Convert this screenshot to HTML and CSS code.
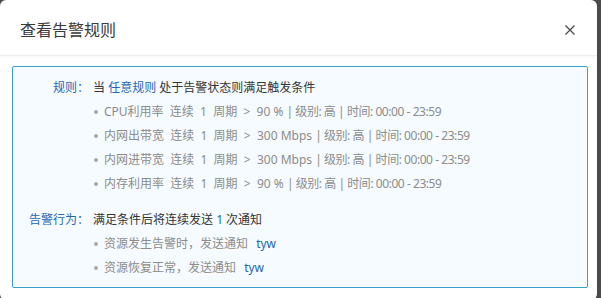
FILE: index.html
```html
<!DOCTYPE html>
<html lang="zh-CN">
<head>
<meta charset="UTF-8" />
<title>查看告警规则</title>
<link rel="stylesheet" href="styles.css">
</head>
<body>
<div class="dialog">
  <header class="dialog-header">
    <h2 class="dialog-title">查看告警规则</h2>
    <button class="dialog-close" aria-label="关闭">
      <svg width="10" height="10" viewBox="0 0 10 10"><path d="M0.5 0.5L9.5 9.5M9.5 0.5L0.5 9.5" stroke="#4a4a4a" stroke-width="1.3" fill="none"/></svg>
    </button>
  </header>

  <div class="dialog-body">
    <div class="rule-box">
      <section class="rule-section">
        <div class="rule-label">规则：</div>
        <div class="rule-content">
          <div class="rule-line">当 <span class="hl">任意规则</span> 处于告警状态则满足触发条件</div>
          <ul class="rule-list">
            <li>CPU利用率 &nbsp;连续 &nbsp;1 &nbsp;周期 &nbsp;&gt; &nbsp;90 % <span class="meta">| 级别: 高 | 时间: 00:00 - 23:59</span></li>
            <li>内网出带宽 &nbsp;连续 &nbsp;1 &nbsp;周期 &nbsp;&gt; &nbsp;300 Mbps <span class="meta">| 级别: 高 | 时间: 00:00 - 23:59</span></li>
            <li>内网进带宽 &nbsp;连续 &nbsp;1 &nbsp;周期 &nbsp;&gt; &nbsp;300 Mbps <span class="meta">| 级别: 高 | 时间: 00:00 - 23:59</span></li>
            <li>内存利用率 &nbsp;连续 &nbsp;1 &nbsp;周期 &nbsp;&gt; &nbsp;90 % <span class="meta">| 级别: 高 | 时间: 00:00 - 23:59</span></li>
          </ul>
        </div>
      </section>

      <section class="rule-section action">
        <div class="rule-label">告警行为：</div>
        <div class="rule-content">
          <div class="rule-line">满足条件后将连续发送 <span class="hl">1</span> 次通知</div>
          <ul class="rule-list">
            <li>资源发生告警时，发送通知 <span class="hl user">tyw</span></li>
            <li>资源恢复正常，发送通知 <span class="hl user">tyw</span></li>
          </ul>
        </div>
      </section>
    </div>
  </div>
</div>
</body>
</html>
```

FILE: styles.css
```css
* {
  box-sizing: border-box;
}
html, body {
  height: 100%;
}
body {
  margin: 0;
  background: #4a4a4a;
  overflow: hidden;
  font-family: "Noto Sans", "Noto Sans CJK SC", sans-serif;
  font-size: 12px;
  color: #333;
}
.dialog {
  width: 597px;
  height: 300px;
  background: #fff;
  border-radius: 6px;
  overflow: hidden;
}
.dialog-header {
  height: 56px;
  padding: 2px 22px 0 20px;
  display: flex;
  align-items: center;
  justify-content: space-between;
  border-bottom: 1px solid #ececec;
  box-shadow: 0 1px 3px rgba(0, 0, 0, 0.04);
}
.dialog-title {
  margin: 0;
  font-size: 16px;
  font-weight: 400;
  color: #3a3a3a;
}
.dialog-close {
  border: none;
  background: none;
  padding: 0;
  margin-top: 3px;
  width: 10px;
  height: 10px;
  line-height: 0;
  cursor: pointer;
}
.dialog-body {
  padding: 10px 9px 0 12px;
}
.rule-box {
  border: 1px solid #3a9fcc;
  border-radius: 2px;
  background: #f5fbff;
  padding: 9px 0 7px 0;
}
.rule-section {
  display: grid;
  grid-template-columns: 76px 1fr;
  column-gap: 4px;
  line-height: 24px;
}
.rule-section.action {
  margin-top: 12px;
}
.rule-label {
  text-align: right;
  color: #2566b5;
}
.rule-line {
  color: #333;
  white-space: nowrap;
}
.hl {
  color: #2566b5;
}
.user {
  margin-left: 5px;
}
.rule-list {
  list-style: none;
  margin: 0;
  padding: 0;
  color: #8c8c8c;
}
.rule-list li {
  white-space: nowrap;
}
.rule-list li::before {
  content: "";
  display: inline-block;
  width: 4px;
  height: 4px;
  border-radius: 50%;
  background: #aaa;
  margin: 0 6px 2px 1px;
  vertical-align: middle;
}
.meta {
  letter-spacing: -0.45px;
}
```
